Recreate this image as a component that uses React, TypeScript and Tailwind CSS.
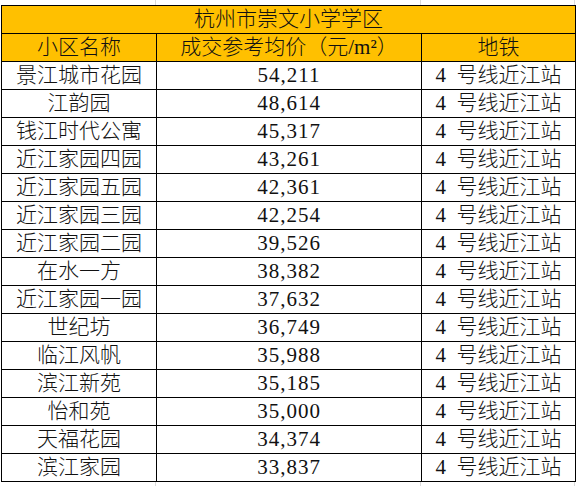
const ROWS: [string, string][] = [
  ["景江城市花园", "54,211"],
  ["江韵园", "48,614"],
  ["钱江时代公寓", "45,317"],
  ["近江家园四园", "43,261"],
  ["近江家园五园", "42,361"],
  ["近江家园三园", "42,254"],
  ["近江家园二园", "39,526"],
  ["在水一方", "38,382"],
  ["近江家园一园", "37,632"],
  ["世纪坊", "36,749"],
  ["临江风帆", "35,988"],
  ["滨江新苑", "35,185"],
  ["怡和苑", "35,000"],
  ["天福花园", "34,374"],
  ["滨江家园", "33,837"],
];

const cell = "flex h-[28px] items-center justify-center border-r border-b border-black leading-none";

export default function App() {
  return (
    <div
      className="h-[486px] w-[578px] overflow-hidden bg-white text-[21px] font-light text-[#111]"
      style={{ fontFamily: '"Liberation Serif", "Noto Sans CJK SC", serif' }}
    >
      {/* faint spreadsheet gridlines above the table */}
      <div className="ml-px grid h-[5px] grid-cols-[155px_265px_154px]">
        <div className="border-r border-[#dadada]" />
        <div className="border-r border-[#dadada]" />
        <div className="border-r border-[#dadada]" />
      </div>

      <div className="ml-px w-[575px] border-t border-l border-black">
        <div className={`${cell} bg-[#FFC000]`}>杭州市崇文小学学区</div>
        <div className="grid grid-cols-[155px_265px_154px] bg-[#FFC000]">
          <div className={cell}>小区名称</div>
          <div className={cell}>成交参考均价（元/m²）</div>
          <div className={cell}>地铁</div>
        </div>
        {ROWS.map(([name, price]) => (
          <div key={name} className="grid grid-cols-[155px_265px_154px]">
            <div className={cell}>{name}</div>
            <div className={`${cell} tracking-[1px]`}>{price}</div>
            <div className={`${cell} whitespace-pre`}>{"4  号线近江站"}</div>
          </div>
        ))}
      </div>

      <div className="ml-px grid h-[6px] grid-cols-[155px_265px_154px]">
        <div className="border-r border-[#dadada]" />
        <div className="border-r border-[#dadada]" />
        <div className="border-r border-[#dadada]" />
      </div>
    </div>
  );
}
